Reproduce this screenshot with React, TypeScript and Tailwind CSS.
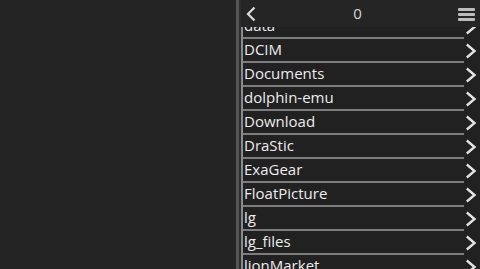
import React from "react";

const folders = [
  "data",
  "DCIM",
  "Documents",
  "dolphin-emu",
  "Download",
  "DraStic",
  "ExaGear",
  "FloatPicture",
  "lg",
  "lg_files",
  "lionMarket",
];

const Chevron = () => (
  <svg width="12" height="16" viewBox="0 0 12 16" className="shrink-0">
    <path d="M1.8 1.5 L9.5 8 L1.8 14.5" fill="none" stroke="#e2e2e2" strokeWidth="2.4" />
  </svg>
);

export default function App() {
  return (
    <div
      className="flex h-[269px] w-[480px] overflow-hidden bg-[#232323]"
      style={{ fontFamily: '"Open Sans", Roboto, sans-serif' }}
    >
      <div className="w-[236px] shrink-0 bg-[#242424]" />
      <div className="w-[3px] shrink-0 bg-[#555555]" />
      <div className="w-[2px] shrink-0 bg-[#2c2c2c]" />
      <div className="relative flex min-w-0 flex-1 flex-col bg-[#212121]">
        <div className="relative z-10 flex h-[27px] shrink-0 items-center bg-[#252525] pl-[4px] pr-[5px]">
          <svg width="12" height="16" viewBox="0 0 12 16">
            <path d="M9.5 1.5 L3 8 L9.5 14.5" fill="none" stroke="#dcdcdc" strokeWidth="2.2" />
          </svg>
          <div className="flex-1 text-center text-[15px] leading-none text-[#d8d8d8]">0</div>
          <div className="flex flex-col gap-[2px] pt-[1px]">
            <div className="h-[3px] w-[17px] rounded-[1px] bg-[#bdbdbd]" />
            <div className="h-[3px] w-[17px] rounded-[1px] bg-[#bdbdbd]" />
            <div className="h-[3px] w-[17px] rounded-[1px] bg-[#bdbdbd]" />
          </div>
        </div>
        <div className="flex-1 overflow-hidden">
          <div className="-mt-[12px] flex flex-col">
            {folders.map((name) => (
              <div key={name} className="flex h-[24px] items-stretch">
                <div className="flex min-w-0 flex-1 flex-col border-l-2 border-[#8a8a8a]">
                  <div className="flex flex-1 items-center pb-[1px] pl-[1px] text-[15px] leading-none text-[#ececec]">
                    {name}
                  </div>
                  <div className="h-[2px] bg-[#7c7c7c]" />
                </div>
                <div className="flex w-[16px] items-center justify-start pl-[1px]">
                  <Chevron />
                </div>
              </div>
            ))}
          </div>
        </div>
      </div>
    </div>
  );
}
